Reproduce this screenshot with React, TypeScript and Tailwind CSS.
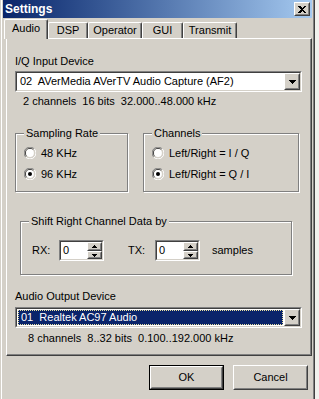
import React from 'react';

const FONT = '"Liberation Sans", Arial, sans-serif';

function Raised({ className = '', children }: { className?: string; children?: React.ReactNode }) {
  return (
    <div className={`border border-t-white border-l-white border-r-[#404040] border-b-[#404040] ${className}`}>
      <div className="w-full h-full border border-t-[#d4d0c8] border-l-[#d4d0c8] border-r-[#808080] border-b-[#808080] flex items-center justify-center bg-[#d4d0c8]">
        {children}
      </div>
    </div>
  );
}

function Sunken({ className = '', innerClass = '', children }: { className?: string; innerClass?: string; children?: React.ReactNode }) {
  return (
    <div className={`border border-t-[#808080] border-l-[#808080] border-r-white border-b-white ${className}`}>
      <div className={`w-full h-full border border-t-[#404040] border-l-[#404040] border-r-[#d4d0c8] border-b-[#d4d0c8] ${innerClass}`}>
        {children}
      </div>
    </div>
  );
}

function DownArrow() {
  return (
    <svg width="7" height="4" shapeRendering="crispEdges">
      <rect x="0" y="0" width="7" height="1" fill="#000" />
      <rect x="1" y="1" width="5" height="1" fill="#000" />
      <rect x="2" y="2" width="3" height="1" fill="#000" />
      <rect x="3" y="3" width="1" height="1" fill="#000" />
    </svg>
  );
}

function SmallArrow({ up }: { up?: boolean }) {
  return (
    <svg width="5" height="3" shapeRendering="crispEdges">
      {up ? (
        <>
          <rect x="2" y="0" width="1" height="1" fill="#000" />
          <rect x="1" y="1" width="3" height="1" fill="#000" />
          <rect x="0" y="2" width="5" height="1" fill="#000" />
        </>
      ) : (
        <>
          <rect x="0" y="0" width="5" height="1" fill="#000" />
          <rect x="1" y="1" width="3" height="1" fill="#000" />
          <rect x="2" y="2" width="1" height="1" fill="#000" />
        </>
      )}
    </svg>
  );
}

function Combo({ text, selected }: { text: string; selected?: boolean }) {
  return (
    <Sunken className="w-[287px] h-[21px]" innerClass="flex items-stretch bg-white">
      {selected ? (
        <div className="flex-1 m-[1px] bg-[#0a246a] border border-dotted border-[#e8e0a0] flex items-center pl-[2px] text-white whitespace-pre">
          {text}
        </div>
      ) : (
        <div className="flex-1 flex items-center pl-[3px] whitespace-pre">{text}</div>
      )}
      <Raised className="w-[16px] h-full">
        <DownArrow />
      </Raised>
    </Sunken>
  );
}

function Radio({ checked, label }: { checked?: boolean; label: string }) {
  return (
    <div className="flex items-center h-[14px] gap-[5px]">
      <svg width="12" height="12">
        <path d="M10.2 1.8 A5.6 5.6 0 0 0 1.8 10.2" stroke="#808080" strokeWidth="1" fill="none" />
        <path d="M1.8 10.2 A5.6 5.6 0 0 0 10.2 1.8" stroke="#ffffff" strokeWidth="1" fill="none" />
        <path d="M9.3 2.7 A4.4 4.4 0 0 0 2.7 9.3" stroke="#404040" strokeWidth="1" fill="none" />
        <path d="M2.7 9.3 A4.4 4.4 0 0 0 9.3 2.7" stroke="#d4d0c8" strokeWidth="1" fill="none" />
        <circle cx="6" cy="6" r="3.9" fill="#ffffff" />
        {checked && <circle cx="6" cy="6" r="2" fill="#000" />}
      </svg>
      <span className="leading-[13px]">{label}</span>
    </div>
  );
}

function Group({ label, className = '', children }: { label: string; className?: string; children?: React.ReactNode }) {
  return (
    <div className={`relative border border-[#808080] shadow-[1px_1px_0_#ffffff,inset_1px_1px_0_#ffffff] ${className}`}>
      <span className="absolute -top-[7px] left-[8px] px-[2px] bg-[#d4d0c8] leading-[13px]">{label}</span>
      {children}
    </div>
  );
}

function Spin({ value }: { value: string }) {
  return (
    <Sunken className="w-[45px] h-[21px]" innerClass="flex bg-white">
      <div className="flex-1 flex items-center pl-[2px]">{value}</div>
      <div className="w-[15px] flex flex-col">
        <Raised className="h-[9px]">
          <SmallArrow up />
        </Raised>
        <Raised className="h-[8px]">
          <SmallArrow />
        </Raised>
      </div>
    </Sunken>
  );
}

function Tab({ label, w, selected }: { label: string; w: string; selected?: boolean }) {
  return (
    <div
      className={`${w} ${selected ? 'h-[20px] mb-[-1px] relative z-10 pb-[2px]' : 'h-[16px]'} bg-[#d4d0c8] border-t border-l border-r border-t-white border-l-white border-r-[#404040] rounded-t-[2px] shadow-[inset_-1px_0_0_#808080] flex items-center justify-center leading-[13px]`}
    >
      {label}
    </div>
  );
}

export default function App() {
  return (
    <div className="w-[319px] h-[399px] flex bg-[#f2f2ee] text-[11px] text-black overflow-hidden" style={{ fontFamily: FONT }}>
      <div className="w-[315px] h-full flex bg-[#d4d0c8]">
        {/* left window border */}
        <div className="w-[1px] h-full bg-[#d4d0c8]" />
        <div className="w-[1px] h-full bg-white" />
        <div className="w-[1px] h-full bg-[#d4d0c8]" />
        <div className="w-[309px] h-full flex flex-col">
          {/* title bar */}
          <div className="h-[18px] flex items-center justify-between bg-gradient-to-r from-[#0a246a] to-[#a6caf0] pl-[2px] pr-[2px]">
            <span className="text-white font-bold text-[12px] leading-[14px]">Settings</span>
            <Raised className="w-[16px] h-[14px]">
              <svg width="8" height="7" shapeRendering="crispEdges">
                <path d="M0 0h2l2 2 2-2h2l-3 3.5 3 3.5h-2l-2-2-2 2h-2l3-3.5z" fill="#000" />
              </svg>
            </Raised>
          </div>
          {/* tabs */}
          <div className="mt-[1px] h-[19px] flex items-end pl-[1px]">
            <Tab label="Audio" w="w-[44px]" selected />
            <Tab label="DSP" w="w-[40px]" />
            <Tab label="Operator" w="w-[54px]" />
            <Tab label="GUI" w="w-[41px]" />
            <Tab label="Transmit" w="w-[54px]" />
          </div>
          {/* panel */}
          <div className="ml-[3px] w-[306px] h-[318px] border border-t-white border-l-white border-r-[#404040] border-b-[#404040] shadow-[inset_-1px_-1px_0_#808080] flex flex-col">
            <div className="pt-[16px] pl-[8px] leading-[13px]">I/Q Input Device</div>
            <div className="mt-[3px] ml-[8px]">
              <Combo text="02  AVerMedia AVerTV Audio Capture (AF2)" />
            </div>
            <div className="mt-[3px] ml-[16px] leading-[13px] whitespace-pre">2 channels  16 bits  32.000..48.000 kHz</div>
            <div className="mt-[25px] ml-[8px] flex gap-[15px]">
              <Group label="Sampling Rate" className="w-[113px] h-[59px]">
                <div className="pt-[12px] pl-[8px] flex flex-col gap-[7px]">
                  <Radio label="48 KHz" />
                  <Radio label="96 KHz" checked />
                </div>
              </Group>
              <Group label="Channels" className="w-[156px] h-[59px]">
                <div className="pt-[12px] pl-[8px] flex flex-col gap-[7px]">
                  <Radio label="Left/Right = I / Q" />
                  <Radio label="Left/Right = Q / I" checked />
                </div>
              </Group>
            </div>
            <div className="mt-[29px] ml-[13px]">
              <Group label="Shift Right Channel Data by" className="w-[272px] h-[54px]">
                <div className="pt-[18px] pl-[11px] flex items-center">
                  <span className="w-[27px]">RX:</span>
                  <Spin value="0" />
                  <span className="ml-[24px] w-[27px]">TX:</span>
                  <Spin value="0" />
                  <span className="ml-[12px]">samples</span>
                </div>
              </Group>
            </div>
            <div className="mt-[15px] ml-[8px] leading-[13px]">Audio Output Device</div>
            <div className="mt-[4px] ml-[8px]">
              <Combo text="01  Realtek AC97 Audio" selected />
            </div>
            <div className="mt-[4px] ml-[21px] leading-[13px] whitespace-pre">8 channels  8..32 bits  0.100..192.000 kHz</div>
          </div>
          {/* buttons */}
          <div className="mt-[9px] flex justify-end gap-[9px] pr-[4px]">
            <div className="w-[75px] h-[25px] border border-black">
              <Raised className="w-full h-full">
                <span className="leading-[13px]">OK</span>
              </Raised>
            </div>
            <Raised className="w-[75px] h-[25px]">
              <span className="leading-[13px]">Cancel</span>
            </Raised>
          </div>
        </div>
        {/* right window border */}
        <div className="w-[1px] h-full bg-[#d4d0c8]" />
        <div className="w-[1px] h-full bg-[#808080]" />
        <div className="w-[1px] h-full bg-[#404040]" />
      </div>
    </div>
  );
}
